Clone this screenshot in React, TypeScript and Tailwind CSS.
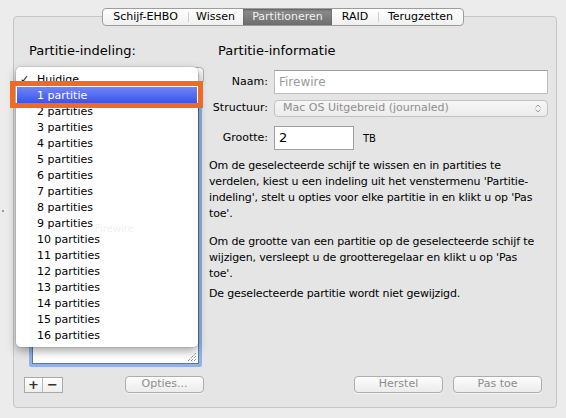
import React from 'react';

const tabs = [
    { label: 'Schijf-EHBO', w: 'w-[85px]' },
    { label: 'Wissen', w: 'w-[55px]' },
    { label: 'Partitioneren', w: 'w-[89px]', active: true },
    { label: 'RAID', w: 'w-[46px]' },
    { label: 'Terugzetten', w: 'w-[85px]' },
];

const menuItems = [
    'Huidige',
    '1 partitie',
    ...Array.from({ length: 15 }, (_, i) => `${i + 2} partities`),
];

// Small up/down chevrons used in pop-up buttons
const UpDown = () => (
    <svg width="6" height="9" viewBox="0 0 6 9" className="shrink-0">
        <path d="M0.5 3.5 L3 1 L5.5 3.5" fill="none" stroke="#9a9a9a" strokeWidth="1" />
        <path d="M0.5 5.5 L3 8 L5.5 5.5" fill="none" stroke="#9a9a9a" strokeWidth="1" />
    </svg>
);

const MacButton = ({ label, className = '' }: { label: string; className?: string }) => (
    <div
        className={`flex h-[17px] items-center justify-center rounded-[4px] border border-[#adadad] bg-gradient-to-b from-[#fcfcfc] to-[#ececec] text-[11px] text-[#8c8c8c] shadow-[0_1px_0_rgba(255,255,255,0.6)] ${className}`}
    >
        {label}
    </div>
);

const TabBar = () => (
    <div className="relative z-10 flex justify-center">
        <div className="flex h-[18px] overflow-hidden rounded-[4px] border border-[#9d9d9d] bg-gradient-to-b from-white to-[#f0f0f0]">
            {tabs.map((t, i) => (
                <div
                    key={t.label}
                    className={`relative flex items-center justify-center text-[11px] ${t.w} ${
                        t.active
                            ? 'bg-gradient-to-b from-[#8e8e8e] to-[#6e6e6e] text-[#f2f2f2] shadow-[inset_0_1px_2px_rgba(0,0,0,0.35)]'
                            : 'text-black'
                    }`}
                >
                    {i > 0 && !t.active && !tabs[i - 1].active && (
                        <span className="absolute left-0 top-[3px] h-[10px] w-px bg-[#cdcdcd]" />
                    )}
                    {t.label}
                </div>
            ))}
        </div>
    </div>
);

const FieldLabel = ({ children }: { children: React.ReactNode }) => (
    <div className="w-[59px] shrink-0 text-right text-[11px]">{children}</div>
);

export default function App() {
    return (
        <div className="relative h-[418px] w-[566px] overflow-hidden bg-[#ececec] px-[13px] pt-[8px] font-['DejaVu_Sans',sans-serif] text-black">
            <TabBar />

            {/* Group box */}
            <div className="-mt-[10px] flex h-[392px] w-[544px] rounded-[4px] border border-[#c6c6c6] bg-[#e5e5e5] pb-[14px] pl-[10px] pt-[26px]">
                {/* Left column */}
                <div className="flex w-[180px] flex-col">
                    <div className="ml-[5px] h-[16px] text-[13px] leading-[16px]">Partitie-indeling:</div>
                    <div className="ml-[5px] mt-[8px] flex h-[17px] w-[175px] items-center justify-end rounded-[4px] border border-[#adadad] bg-gradient-to-b from-[#fcfcfc] to-[#e6e6e6] pr-[4px]">
                        <UpDown />
                    </div>
                    <div className="relative ml-[5px] mt-[7px] h-[276px] w-[173px] rounded-[2px] border-[3px] border-[#8fb3e4] bg-white shadow-[inset_0_0_0_1px_#5b78a6]">
                        <svg width="10" height="10" viewBox="0 0 10 10" className="absolute bottom-[2px] right-[2px]">
                            <path d="M1 9 L9 1 M4 9 L9 4 M7 9 L9 7" stroke="#555" strokeWidth="1" strokeDasharray="1 1" />
                        </svg>
                    </div>
                    <div className="mt-auto flex items-center justify-between">
                        <div className="flex h-[16px] border border-[#a9a9a9] bg-gradient-to-b from-white to-[#eeeeee] text-[13px] font-bold leading-none text-[#333]">
                            <div className="flex w-[18px] items-center justify-center border-r border-[#b9b9b9]">+</div>
                            <div className="flex w-[19px] items-center justify-center">−</div>
                        </div>
                        <MacButton label="Opties..." className="w-[79px]" />
                    </div>
                </div>

                {/* Right column */}
                <div className="ml-[5px] flex w-[339px] flex-col">
                    <div className="ml-[9px] h-[16px] text-[13px] leading-[16px]">Partitie-informatie</div>

                    <div className="mt-[11px] flex items-center gap-[6px]">
                        <FieldLabel>Naam:</FieldLabel>
                        <div className="flex h-[24px] flex-1 items-center border border-[#bdbdbd] border-t-[#9f9f9f] bg-white pl-[4px] text-[12px] text-[#9a9a9a]">
                            Firewire
                        </div>
                    </div>

                    <div className="mt-[6px] flex items-center gap-[6px]">
                        <FieldLabel>Structuur:</FieldLabel>
                        <div className="flex h-[17px] flex-1 items-center justify-between rounded-[4px] border border-[#c2c2c2] bg-gradient-to-b from-[#f6f6f6] to-[#ececec] pl-[8px] pr-[6px] text-[11px] text-[#8e8e8e]">
                            <span>Mac OS Uitgebreid (journaled)</span>
                            <UpDown />
                        </div>
                    </div>

                    <div className="mt-[9px] flex items-center gap-[6px]">
                        <FieldLabel>Grootte:</FieldLabel>
                        <div className="flex h-[24px] w-[80px] items-center border border-[#9f9f9f] bg-white pl-[4px] text-[13px]">2</div>
                        <span className="ml-[3px] text-[10px]">TB</span>
                    </div>

                    <div className="mt-[8px] whitespace-nowrap text-[11px] leading-[16px] tracking-[-0.15px]">
                        <p>Om de geselecteerde schijf te wissen en in partities te</p>
                        <p>verdelen, kiest u een indeling uit het venstermenu 'Partitie-</p>
                        <p>indeling', stelt u opties voor elke partitie in en klikt u op 'Pas</p>
                        <p>toe'.</p>
                        <p className="mt-[12px]">Om de grootte van een partitie op de geselecteerde schijf te</p>
                        <p>wijzigen, versleept u de grootteregelaar en klikt u op 'Pas</p>
                        <p>toe'.</p>
                        <p className="mt-[4px]">De geselecteerde partitie wordt niet gewijzigd.</p>
                    </div>

                    <div className="mt-auto flex justify-end gap-[10px] pr-[6px]">
                        <MacButton label="Herstel" className="w-[89px]" />
                        <MacButton label="Pas toe" className="w-[89px]" />
                    </div>
                </div>
            </div>

            {/* stray mark at the window edge */}
            <span className="absolute left-[2px] top-[210px] h-[2px] w-[2px] bg-[#9a9a9a]" />

            {/* Open pop-up menu */}
            <div className="absolute left-[16px] top-[67px] w-[182px] rounded-[5px] bg-white/[0.97] pb-[4px] pt-[4px] shadow-[0_4px_10px_rgba(0,0,0,0.35),0_0_0_1px_rgba(0,0,0,0.08)]">
                <span className="absolute left-[79px] top-[154px] text-[10px] text-[#f1f1f1]">Firewire</span>
                {menuItems.map((item, i) => (
                    <div
                        key={item}
                        className={`relative h-[16px] pt-[1px] text-[11px] leading-[16px] ${
                            i === 1 ? 'mx-px bg-gradient-to-b from-[#7084f6] to-[#3d52ec] pl-[20px] text-white' : 'pl-[21px] text-black'
                        }`}
                    >
                        {i === 0 && <span className="absolute left-[4px] top-[1px] text-[11px]">✓</span>}
                        {item}
                    </div>
                ))}
            </div>

            {/* Orange highlight frame */}
            <div className="absolute left-[10px] top-[81px] h-[27px] w-[193px] border-[5px] border-[#f26a21]" />
        </div>
    );
}
